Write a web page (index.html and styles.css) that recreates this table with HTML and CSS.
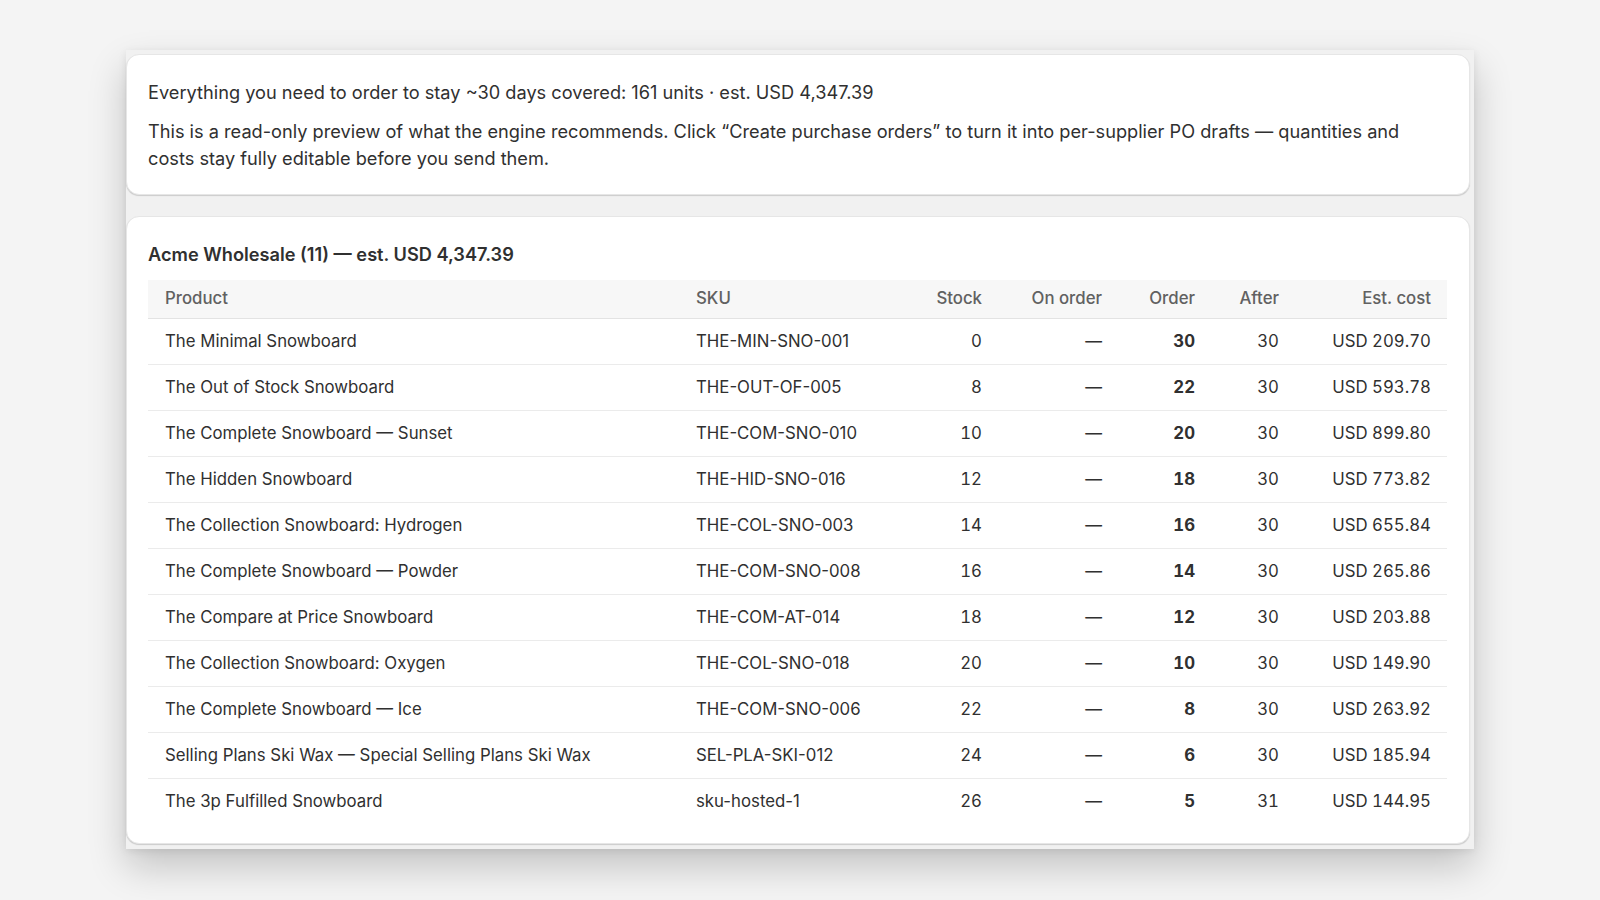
FILE: index.html
```html
<!DOCTYPE html>
<html lang="en">
<head>
<meta charset="utf-8">
<title>Purchase order preview</title>
<link rel="stylesheet" href="styles.css">
</head>
<body>
<div class="stage">
  <div class="window">
    <section class="card intro">
      <p class="lead">Everything you need to order to stay ~30 days covered: 161 units · est. USD 4,347.39</p>
      <p>This is a read-only preview of what the engine recommends. Click “Create purchase orders” to turn it into per-supplier PO drafts — quantities and costs stay fully editable before you send them.</p>
    </section>
    <section class="card supplier">
      <h2 class="supplier-title">Acme Wholesale (11) — est. USD 4,347.39</h2>
      <table class="po-table">
        <colgroup>
          <col class="c-product"><col class="c-sku"><col class="c-stock"><col class="c-onorder"><col class="c-order"><col class="c-after"><col class="c-cost">
        </colgroup>
        <thead>
          <tr><th>Product</th><th>SKU</th><th class="num">Stock</th><th class="num">On order</th><th class="num">Order</th><th class="num">After</th><th class="num">Est. cost</th></tr>
        </thead>
        <tbody>
          <tr><td>The Minimal Snowboard</td><td>THE-MIN-SNO-001</td><td class="num">0</td><td class="num">—</td><td class="num strong">30</td><td class="num">30</td><td class="num">USD 209.70</td></tr>
          <tr><td>The Out of Stock Snowboard</td><td>THE-OUT-OF-005</td><td class="num">8</td><td class="num">—</td><td class="num strong">22</td><td class="num">30</td><td class="num">USD 593.78</td></tr>
          <tr><td>The Complete Snowboard — Sunset</td><td>THE-COM-SNO-010</td><td class="num">10</td><td class="num">—</td><td class="num strong">20</td><td class="num">30</td><td class="num">USD 899.80</td></tr>
          <tr><td>The Hidden Snowboard</td><td>THE-HID-SNO-016</td><td class="num">12</td><td class="num">—</td><td class="num strong">18</td><td class="num">30</td><td class="num">USD 773.82</td></tr>
          <tr><td>The Collection Snowboard: Hydrogen</td><td>THE-COL-SNO-003</td><td class="num">14</td><td class="num">—</td><td class="num strong">16</td><td class="num">30</td><td class="num">USD 655.84</td></tr>
          <tr><td>The Complete Snowboard — Powder</td><td>THE-COM-SNO-008</td><td class="num">16</td><td class="num">—</td><td class="num strong">14</td><td class="num">30</td><td class="num">USD 265.86</td></tr>
          <tr><td>The Compare at Price Snowboard</td><td>THE-COM-AT-014</td><td class="num">18</td><td class="num">—</td><td class="num strong">12</td><td class="num">30</td><td class="num">USD 203.88</td></tr>
          <tr><td>The Collection Snowboard: Oxygen</td><td>THE-COL-SNO-018</td><td class="num">20</td><td class="num">—</td><td class="num strong">10</td><td class="num">30</td><td class="num">USD 149.90</td></tr>
          <tr><td>The Complete Snowboard — Ice</td><td>THE-COM-SNO-006</td><td class="num">22</td><td class="num">—</td><td class="num strong">8</td><td class="num">30</td><td class="num">USD 263.92</td></tr>
          <tr><td>Selling Plans Ski Wax — Special Selling Plans Ski Wax</td><td>SEL-PLA-SKI-012</td><td class="num">24</td><td class="num">—</td><td class="num strong">6</td><td class="num">30</td><td class="num">USD 185.94</td></tr>
          <tr><td>The 3p Fulfilled Snowboard</td><td>sku-hosted-1</td><td class="num">26</td><td class="num">—</td><td class="num strong">5</td><td class="num">31</td><td class="num">USD 144.95</td></tr>
        </tbody>
      </table>
    </section>
  </div>
</div>
</body>
</html>
```
FILE: styles.css
```css
* { box-sizing: border-box; }

html, body {
  margin: 0;
  padding: 0;
  background: #f4f4f4;
  font-family: Inter, "Noto Sans", "Liberation Sans", sans-serif;
  color: #303030;
}

.stage {
  padding: 50px 0 0 126px;
  height: 900px;
}

.window {
  width: 1348px;
  height: 799px;
  background: #f1f1f1;
  padding: 4px 4px 0 0;
  box-shadow: 0 18px 36px rgba(0, 0, 0, 0.2), 0 2px 8px rgba(0, 0, 0, 0.08);
  display: flex;
  flex-direction: column;
  gap: 21px;
}

.card {
  background: #ffffff;
  border: 1px solid #e6e6e6;
  border-radius: 13px;
  box-shadow: 0 1px 1px rgba(0, 0, 0, 0.16);
  font-size: 18.2px;
  line-height: 27.7px;
}

.intro {
  padding: 24px 22px 21px 21px;
}

.intro p {
  margin: 0;
}

.intro .lead {
  margin-bottom: 11px;
}

.supplier {
  padding: 24px 22px 19px 21px;
}

.supplier-title {
  margin: 0 0 11px;
  font-size: 18.2px;
  line-height: 27.7px;
  font-weight: 600;
}

.po-table {
  width: 1299px;
  border-collapse: collapse;
  table-layout: fixed;
  font-size: 16.8px;
}

.c-product { width: 531px; }
.c-sku { width: 220px; }
.c-stock { width: 100px; }
.c-onorder { width: 120px; }
.c-order { width: 93px; }
.c-after { width: 84px; }
.c-cost { width: 151px; }

.po-table th {
  background: #f7f7f7;
  color: #616161;
  font-weight: 500;
  text-align: left;
  height: 39px;
  padding: 0 17px;
  border-bottom: 1px solid #e3e3e3;
}

.po-table td {
  height: 46px;
  padding: 0 17px;
  border-bottom: 1px solid #ebebeb;
  white-space: nowrap;
}

.po-table th:last-child,
.po-table td:last-child {
  padding-right: 16px;
}

.po-table tbody tr:last-child td {
  border-bottom: none;
  height: 45px;
}

.po-table .num {
  text-align: right;
}

.po-table td.num {
  font-variant-numeric: tabular-nums;
}

.po-table .strong {
  font-weight: 700;
}
```
